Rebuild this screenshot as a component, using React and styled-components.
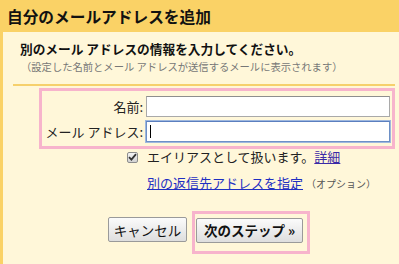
import styled, { createGlobalStyle } from "styled-components";

const GlobalStyle = createGlobalStyle`
  html, body {
    margin: 0;
    padding: 0;
    background: #fff7d9;
  }
  body {
    font-family: "Noto Sans CJK JP", "Noto Sans", sans-serif;
    color: #222;
  }
`;

const Page = styled.div`
  width: 399px;
  height: 264px;
  overflow: hidden;
  background: #fff7d9;
`;

const Header = styled.div`
  height: 32px;
  box-sizing: border-box;
  padding: 1px 0 0 7px;
  display: flex;
  align-items: center;
  background: #fad266;
  font-size: 15.7px;
  font-weight: bold;
  color: #111;
`;

const Body = styled.div`
  border-left: 3px solid #fad266;
  height: 232px;
  box-sizing: border-box;
  background: #fff7d9;
`;

const Intro = styled.div`
  padding: 9px 0 0 17px;
`;

const Heading = styled.div`
  font-size: 12.7px;
  line-height: 15px;
  font-weight: bold;
  color: #111;
`;

const Note = styled.div`
  margin-top: 4px;
  padding-left: 1px;
  font-size: 10.3px;
  line-height: 14px;
  color: #777;
`;

const Rule = styled.div`
  margin: 10px 4px 0 10px;
  height: 2px;
  background: #f6d06c;
`;

const Highlight = styled.div`
  border: 3px solid #f7b4cc;
`;

const FormBox = styled(Highlight)`
  margin: 2px 4px 0 36px;
  padding: 5px 2px 4px 0;
  display: grid;
  grid-template-columns: 101px 1fr;
  column-gap: 3px;
  row-gap: 4px;
  align-items: center;
`;

const Label = styled.label`
  text-align: right;
  font-size: 13px;
  line-height: 15px;
  white-space: nowrap;
`;

const Field = styled.div`
  position: relative;
`;

const Input = styled.input`
  display: block;
  width: 100%;
  height: 21px;
  box-sizing: border-box;
  margin: 0;
  padding: 0 3px;
  background: #fff;
  font-family: inherit;
  font-size: 13px;
  outline: none;
  border: 1px solid ${(p) => (p.$focused ? "#6d90c6" : "#a9a9a9")};
  border-top-color: ${(p) => (p.$focused ? "#5b7fbf" : "#8e8e8e")};
  box-shadow: ${(p) => (p.$focused ? "0 0 0 1px #9fb8de" : "none")};
`;

const Caret = styled.span`
  position: absolute;
  left: 4px;
  top: 4px;
  width: 1px;
  height: 13px;
  background: #000;
`;

const CheckRow = styled.div`
  display: flex;
  align-items: center;
  margin-left: 124px;
  height: 15px;
  font-size: 13px;
  line-height: 15px;
`;

const Box = styled.span`
  width: 11px;
  height: 11px;
  box-sizing: border-box;
  border: 1px solid #8d8d8d;
  border-radius: 2px;
  background: linear-gradient(#f4f4f4, #d2d2d2);
  display: flex;
  align-items: center;
  justify-content: center;
  margin-right: 9px;
  margin-top: 1px;
`;

const Link = styled.a`
  color: ${(p) => (p.$visited ? "#3b2aa6" : "#1f2fc2")};
  text-decoration: underline;
  cursor: pointer;
`;

const LinkRow = styled.div`
  margin: 11px 0 0 144px;
  font-size: 13px;
  line-height: 15px;
  white-space: nowrap;
`;

const Small = styled.span`
  margin-left: 3px;
  font-size: 10px;
  color: #555;
`;

const Buttons = styled.div`
  display: flex;
  align-items: flex-start;
  margin: 20px 0 0 105px;
`;

const Button = styled.button`
  width: ${(p) => (p.$primary ? "107px" : "79px")};
  height: 25px;
  box-sizing: border-box;
  margin: 0;
  padding: 0;
  border: 1px solid #9a9a9a;
  border-radius: 2px;
  background: linear-gradient(#fbfbfb, #dedede);
  font-family: inherit;
  font-size: 13.5px;
  font-weight: ${(p) => (p.$primary ? "bold" : "normal")};
  color: #111;
  white-space: nowrap;
`;

const CancelButton = styled(Button)`
  margin-top: 6px;
  margin-right: 5px;
`;

const ButtonMark = styled(Highlight)`
  padding: 3px 4px 8px 1px;
`;

export default function App() {
  return (
    <Page>
      <GlobalStyle />
      <Header>自分のメールアドレスを追加</Header>
      <Body>
        <Intro>
          <Heading>別のメール アドレスの情報を入力してください。</Heading>
          <Note>（設定した名前とメール アドレスが送信するメールに表示されます）</Note>
        </Intro>
        <Rule />
        <FormBox>
          <Label htmlFor="name">名前:</Label>
          <Field>
            <Input id="name" type="text" />
          </Field>
          <Label htmlFor="email">メール アドレス:</Label>
          <Field>
            <Input id="email" type="text" $focused />
            <Caret />
          </Field>
        </FormBox>
        <CheckRow>
          <Box>
            <svg width="9" height="8" viewBox="0 0 9 8">
              <path d="M1 4.2 L3.4 6.6 L8 1.2" fill="none" stroke="#333" strokeWidth="1.8" />
            </svg>
          </Box>
          <span>
            エイリアスとして扱います。<Link $visited>詳細</Link>
          </span>
        </CheckRow>
        <LinkRow>
          <Link>別の返信先アドレスを指定</Link>
          <Small>（オプション）</Small>
        </LinkRow>
        <Buttons>
          <CancelButton>キャンセル</CancelButton>
          <ButtonMark>
            <Button $primary>次のステップ »</Button>
          </ButtonMark>
        </Buttons>
      </Body>
    </Page>
  );
}
